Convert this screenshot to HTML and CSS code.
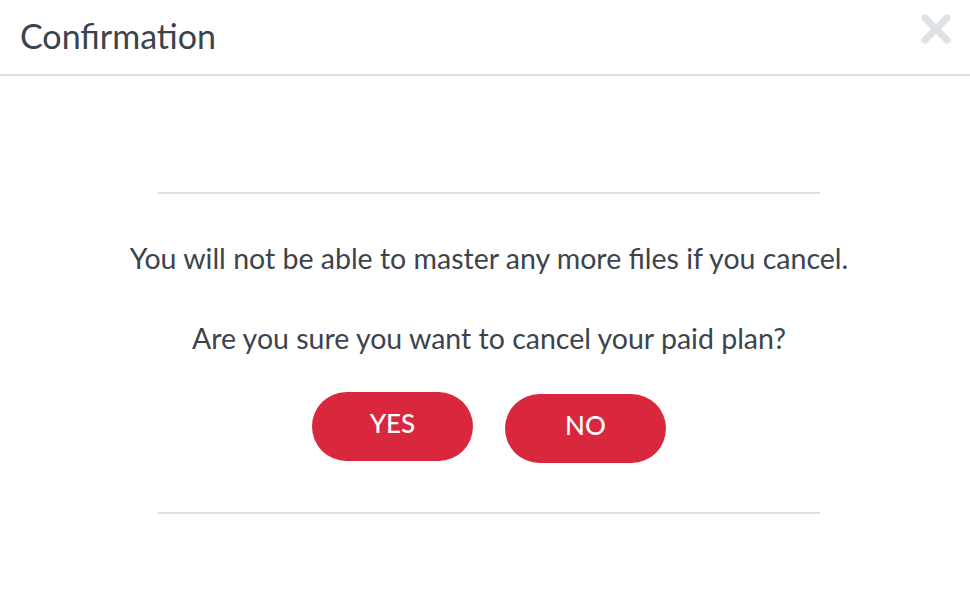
FILE: index.html
```html
<!DOCTYPE html>
<html>
<head>
<meta charset="utf-8">
<link rel="stylesheet" href="styles.css">
</head>
<body>
<div class="modal">
  <div class="header">
    <h1 class="title">Confirmation</h1>
    <button class="close" aria-label="Close">
      <svg width="30" height="30" viewBox="0 0 30 30"><path d="M4 4L26 26M26 4L4 26" stroke="#dfe2e5" stroke-width="7" stroke-linecap="round" fill="none"/></svg>
    </button>
  </div>
  <div class="body">
    <div class="content">
      <p class="msg first">You will not be able to master any more files if you cancel.</p>
      <p class="msg second">Are you sure you want to cancel your paid plan?</p>
      <div class="actions">
        <button class="btn yes">YES</button>
        <button class="btn no">NO</button>
      </div>
    </div>
  </div>
</div>
</body>
</html>
```
FILE: styles.css
```css
* { box-sizing: border-box; }
html, body { margin: 0; padding: 0; background: #fff; }
body { font-family: Lato, "Open Sans", sans-serif; color: #3b444d; }
.modal { width: 970px; height: 604px; }
.header {
  height: 76px;
  border-bottom: 2px solid #e0e0e0;
  display: flex;
  align-items: center;
  justify-content: space-between;
  padding: 0 19px 0 20px;
}
.title { margin: 0; font-size: 34px; font-weight: 400; color: #3b444d; padding-bottom: 4px; }
.close { border: 0; background: none; padding: 0; width: 30px; height: 30px; margin-top: -16px; cursor: pointer; }
.close svg { display: block; }
.body { padding-top: 116px; padding-left: 8px; display: flex; justify-content: center; }
.content {
  width: 662px;
  border-top: 2px solid #e0e0e0;
  border-bottom: 2px solid #e0e0e0;
  display: flex;
  flex-direction: column;
  align-items: center;
}
.msg { margin: 0; font-size: 28.5px; line-height: 34px; white-space: nowrap; }
.msg.first { margin-top: 47px; }
.msg.second { margin-top: 46px; }
.actions { display: flex; align-items: flex-start; gap: 32px; margin-top: 37px; margin-bottom: 49px; }
.btn {
  width: 161px;
  height: 69px;
  border: 0;
  border-radius: 35px;
  background: #d9273e;
  color: #fff;
  font-family: Lato, sans-serif;
  font-size: 26px;
  font-weight: 500;
  padding: 0 0 8px;
}
.btn.no { margin-top: 2px; }
```
